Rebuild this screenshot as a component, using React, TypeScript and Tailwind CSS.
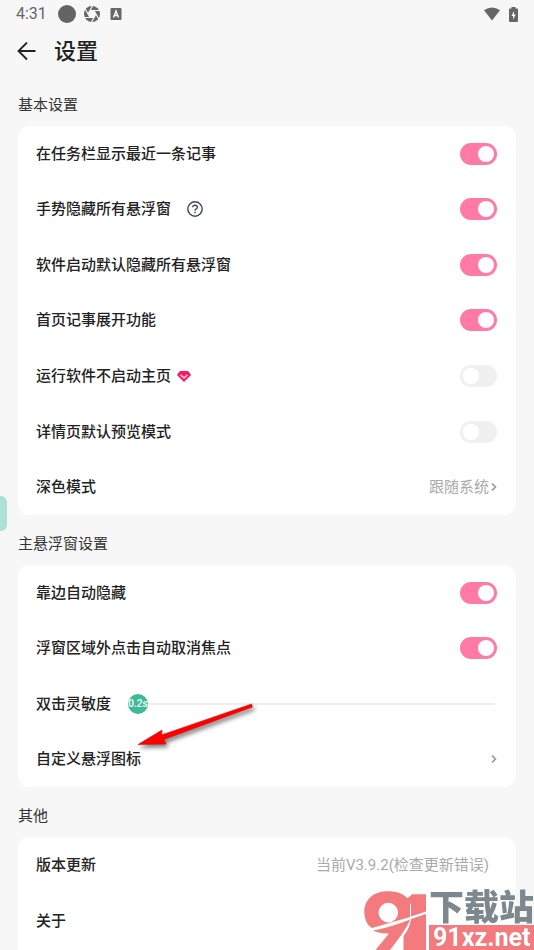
import { useState } from "react"
import type { ReactNode } from "react"

const Toggle = ({ label, initial }: { label: string; initial: boolean }) => {
  const [on, setOn] = useState(initial)

  return (
    <label className="relative flex h-[22px] w-[37px] cursor-pointer">
      <input
        type="checkbox"
        role="switch"
        aria-label={label}
        checked={on}
        onChange={() => setOn(!on)}
        className="peer size-full cursor-pointer appearance-none rounded-full bg-[#f0f0f0] checked:bg-[#ff7ba5]"
      />
      <span className="pointer-events-none absolute top-[3px] left-[3px] size-4 rounded-full bg-white peer-checked:left-[18px]" />
    </label>
  )
}

const Row = ({ label, extra, children }: { label: string; extra?: ReactNode; children?: ReactNode }) => (
  <div className="flex items-center justify-between">
    <div className="flex items-center">
      <span className="font-medium">{label}</span>
      {extra}
    </div>
    {children}
  </div>
)

const SectionTitle = ({ children }: { children: ReactNode }) => (
  <h2 className="flex h-[50px] items-center pt-2 text-[#333]">{children}</h2>
)

const Chevron = () => (
  <svg viewBox="0 0 6 8" className="h-2 w-1.5" fill="none" stroke="#999" strokeWidth="1.6">
    <path d="M1 .7 4.5 4 1 7.3" />
  </svg>
)

const StatusBar = () => (
  <div className="flex h-7 items-center justify-between px-4 font-[Roboto] text-base text-[#666]">
    <div className="flex items-center">
      <span className="w-[42px]">4:31</span>
      <span className="size-[18px] rounded-full bg-[#636363]" />
      <svg viewBox="0 0 16 16" className="ml-2 size-4">
        <circle cx="8" cy="8" r="8" fill="#666" />
        <path d="M12 8 10 11.5H6L4 8 6 4.5h4Z" fill="#f7f7f7" />
        <path
          d="M6 4.5H16M10 4.5 15 13.5M12 8 7.5 16M10 11.5H0M6 11.5 1 2.5M4 8 8.5 0"
          stroke="#f7f7f7"
          strokeWidth="1.2"
        />
      </svg>
      <svg viewBox="0 0 12 12" className="ml-2.5 size-3">
        <rect x=".5" width="11" height="12" rx="1" fill="#666" />
        <path d="M3.5 9.5 6 3l2.5 6.5M4.5 7.5h3" fill="none" stroke="#fff" strokeWidth="1.4" />
      </svg>
    </div>
    <div className="flex items-center gap-2">
      <svg viewBox="0 0 18 14" className="h-3.5 w-[18px]">
        <path d="M1 3.3Q9-2.5 17 3.3L9 13.5Z" fill="#666" />
      </svg>
      <svg viewBox="0 0 9 15" className="h-[15px] w-[9px]">
        <path d="M2.5 0h4v1.5H8q1 0 1 1V14q0 1-1 1H1q-1 0-1-1V2.5q0-1 1-1h1.5Z" fill="#666" />
        <path d="M5 4 2.5 9h1.7v3.5L6.7 7.5H5Z" fill="#fff" />
      </svg>
    </div>
  </div>
)

const Watermark = () => (
  <div className="pointer-events-none fixed right-0 bottom-0 flex h-[60px] w-[170px] items-end">
    <svg viewBox="0 0 65 60" className="h-[60px] w-[65px] shrink-0">
      <path
        d="M24 1.3C36 1.3 43 6 46 12V27L8 38C3 35 .3 29 .3 22C.3 9 10 1.3 24 1.3ZM24.3 12.8a9.8 9.8 0 1 0 0 19.6a9.8 9.8 0 0 0 0-19.6Z"
        fill="#f37b7d"
        fillRule="evenodd"
      />
      <path d="M39 9.5Q45 8 48 4.3H62V21.5L47 26.5V15Q46 12 39 9.5Z" fill="#f37b7d" />
      <path d="M9 40.5Q28 37 46 29.5Q44 37 26 60H11.5L25 43.5Q16 44 9 40.500Z" fill="#f37b7d" />
      <path d="M47 29 62 24V60H39.5V46Q46 38 47 29Z" fill="#f37b7d" />
    </svg>
    <div className="flex-1">
      <div className="h-[35px] text-[35px] leading-[38px] font-black whitespace-nowrap text-[#7d878e]">下载站</div>
      <div className="h-[25px] bg-[#f37b7d] pl-1 text-[25px] leading-[25px] font-bold text-white">91xz.net</div>
    </div>
  </div>
)

export default function App() {
  const [delay, setDelay] = useState(0)

  return (
    <div className="relative flex min-h-screen flex-col overflow-hidden bg-[#f7f7f7] font-[Roboto,'Noto_Sans_CJK_SC',sans-serif] text-[15px] leading-6 text-[#222]">
      <StatusBar />

      <header className="flex h-12 items-center gap-4 px-4">
        <button aria-label="返回" className="cursor-pointer">
          <svg viewBox="0 0 22 20" className="h-5 w-[22px]" fill="none" stroke="#222" strokeWidth="1.8">
            <path d="M19.5 9H3M11 .5 2.5 9l8.500 8.500" />
          </svg>
        </button>
        <h1 className="text-[22px] font-medium">设置</h1>
      </header>

      <main className="flex flex-1 flex-col px-[18px]">
        <SectionTitle>基本设置</SectionTitle>
        <section className="grid min-h-[389px] auto-rows-fr rounded-xl bg-white pr-[19px] pl-[18px]">
          <Row label="在任务栏显示最近一条记事">
            <Toggle label="在任务栏显示最近一条记事" initial={true} />
          </Row>
          <Row
            label="手势隐藏所有悬浮窗"
            extra={
              <button aria-label="帮助" className="ml-4 cursor-pointer">
                <svg viewBox="0 0 16 16" className="size-4" fill="none" stroke="#404858" strokeWidth="1.4">
                  <circle cx="8" cy="8" r="7.2" />
                  <path d="M5.7 6.3Q5.7 4.2 8 4.2T10.3 6.2Q10.3 7.3 8.9 8Q8 8.5 8 9.7M8 10.8v1.5" />
                </svg>
              </button>
            }
          >
            <Toggle label="手势隐藏所有悬浮窗" initial={true} />
          </Row>
          <Row label="软件启动默认隐藏所有悬浮窗">
            <Toggle label="软件启动默认隐藏所有悬浮窗" initial={true} />
          </Row>
          <Row label="首页记事展开功能">
            <Toggle label="首页记事展开功能" initial={true} />
          </Row>
          <Row
            label="运行软件不启动主页"
            extra={
              <svg viewBox="0 0 14 11" className="ml-1.5 h-[11px] w-3.5">
                <path d="M3 .5h8L13.5 4 7 10.5.5 4Z" fill="#ff1766" stroke="#ff1766" strokeLinejoin="round" />
                <path d="M3.7 4 7 7l3.3-3" fill="none" stroke="#fff" strokeWidth="1.2" />
              </svg>
            }
          >
            <Toggle label="运行软件不启动主页" initial={false} />
          </Row>
          <Row label="详情页默认预览模式">
            <Toggle label="详情页默认预览模式" initial={false} />
          </Row>
          <Row label="深色模式">
            <button className="flex cursor-pointer items-center gap-0.5 text-[#aaa]">
              跟随系统
              <Chevron />
            </button>
          </Row>
        </section>

        <SectionTitle>主悬浮窗设置</SectionTitle>
        <section className="grid min-h-[222px] auto-rows-fr rounded-xl bg-white pr-[19px] pl-[18px]">
          <Row label="靠边自动隐藏">
            <Toggle label="靠边自动隐藏" initial={true} />
          </Row>
          <Row label="浮窗区域外点击自动取消焦点">
            <Toggle label="浮窗区域外点击自动取消焦点" initial={true} />
          </Row>
          <Row label="双击灵敏度">
            <div className="relative mr-0.5 ml-[17px] flex h-5 flex-1 items-center">
              <span className="ml-2.5 h-0.5 flex-1 bg-[#efefef]" />
              <input
                type="range"
                aria-label="双击灵敏度"
                min={0}
                max={100}
                value={delay}
                onChange={(e) => setDelay(Number(e.target.value))}
                className="absolute inset-0 w-full appearance-none bg-transparent [&::-webkit-slider-thumb]:size-5 [&::-webkit-slider-thumb]:appearance-none [&::-webkit-slider-thumb]:rounded-full [&::-webkit-slider-thumb]:bg-[#3dbb99]"
              />
              <span
                className="pointer-events-none absolute w-5 text-center text-[10px] leading-5 font-medium text-white"
                style={{ left: `calc((100% - 20px) * ${delay / 100})` }}
              >
                {(0.2 + delay / 100).toFixed(1)}s
              </span>
            </div>
          </Row>
          <Row label="自定义悬浮图标">
            <button aria-label="自定义悬浮图标" className="cursor-pointer">
              <Chevron />
            </button>
          </Row>
        </section>

        <SectionTitle>其他</SectionTitle>
        <section className="flex-1 rounded-t-xl bg-white pr-[19px] pl-[18px]">
          <div className="grid auto-rows-[56px]">
            <Row label="版本更新">
              <span className="mr-2 text-[#aaa]">当前V3.9.2(检查更新错误)</span>
            </Row>
            <Row label="关于" />
          </div>
        </section>
      </main>

      {/* Floating window handle docked to the left edge */}
      <span className="absolute top-[496px] left-0 h-[35px] w-[7px] rounded-r-md bg-[#ade1d4]" />

      {/* Pointer to the custom icon entry */}
      <svg viewBox="0 0 130 60" className="pointer-events-none absolute top-[696px] left-[133px] h-[60px] w-[130px] drop-shadow-[2px_3px_2px_rgba(0,0,0,0.5)]">
        <path d="M118.5 8 119.5 11 31 43.5 33 48 5 48.5 29 34 28.5 39Z" fill="#f00" stroke="#d01010" strokeWidth=".6" />
      </svg>

      <Watermark />
    </div>
  )
}
